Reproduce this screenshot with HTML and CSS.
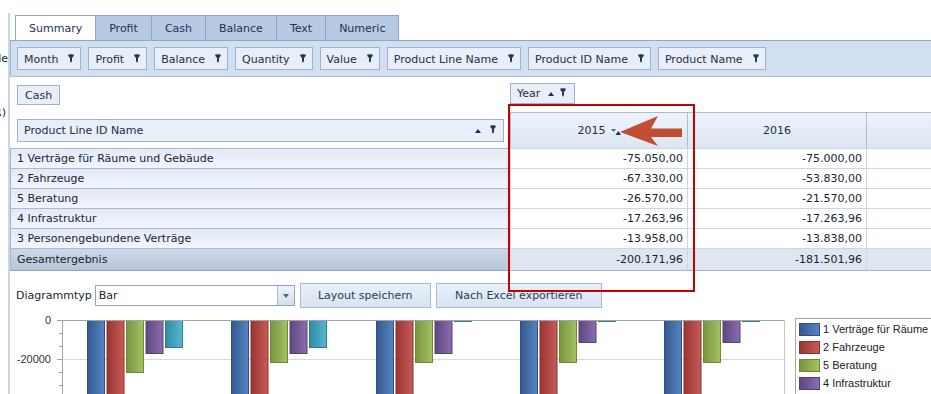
FILE: index.html
```html
<!DOCTYPE html>
<html>
<head>
  <title>Pivot Grid</title>
  <link rel="stylesheet" href="styles.css">
</head>
<body>
  <svg class="defs" width="0" height="0">
    <symbol id="pin" viewBox="0 0 6 9">
      <path d="M0.3 0.6 Q3 -0.2 5.7 0.6 V2 L4 4 V7 L3 9 L2 7 V4 L0.3 2 Z" fill="#233858"/>
    </symbol>
  </svg>

  <div class="page">
    <div class="cut">
      <div class="cut-line cut-top"><span>Tabelle</span></div>
      <div class="cut-line cut-mid"><span>(EUR)</span></div>
    </div>

    <div class="panel">
      <!-- tab strip -->
      <div class="tabs">
        <div class="tab active">Summary</div>
        <div class="tab">Profit</div>
        <div class="tab">Cash</div>
        <div class="tab">Balance</div>
        <div class="tab">Text</div>
        <div class="tab">Numeric</div>
      </div>

      <!-- filter fields -->
      <div class="filters">
        <div class="field">Month<svg class="pin"><use href="#pin"/></svg></div>
        <div class="field">Profit<svg class="pin"><use href="#pin"/></svg></div>
        <div class="field">Balance<svg class="pin"><use href="#pin"/></svg></div>
        <div class="field">Quantity<svg class="pin"><use href="#pin"/></svg></div>
        <div class="field">Value<svg class="pin"><use href="#pin"/></svg></div>
        <div class="field">Product Line Name<svg class="pin"><use href="#pin"/></svg></div>
        <div class="field">Product ID Name<svg class="pin"><use href="#pin"/></svg></div>
        <div class="field">Product Name<svg class="pin"><use href="#pin"/></svg></div>
      </div>

      <!-- pivot table -->
      <div class="pivot">
        <div class="area-data"><div class="field small">Cash</div></div>
        <div class="area-cols"><div class="field year">Year<i class="up"></i><svg class="pin"><use href="#pin"/></svg></div></div>

        <div class="head-left"><div class="field wide"><span>Product Line ID Name</span><i class="up"></i><svg class="pin"><use href="#pin"/></svg></div></div>
        <div class="col-head">2015
          <svg class="sort" width="10" height="7" viewBox="0 0 10 7">
            <path d="M0 1 H5 L2.5 4 Z" fill="#5b6b83"/>
            <path d="M4.5 7 H10 L7.25 3 Z" fill="#1d3050"/>
          </svg>
        </div>
        <div class="col-head">2016</div>
        <div class="col-head"></div>

        <div class="rh">1 Verträge für Räume und Gebäude</div>
        <div class="num">-75.050,00</div><div class="num">-75.000,00</div><div class="num"></div>

        <div class="rh">2 Fahrzeuge</div>
        <div class="num">-67.330,00</div><div class="num">-53.830,00</div><div class="num"></div>

        <div class="rh">5 Beratung</div>
        <div class="num">-26.570,00</div><div class="num">-21.570,00</div><div class="num"></div>

        <div class="rh">4 Infrastruktur</div>
        <div class="num">-17.263,96</div><div class="num">-17.263,96</div><div class="num"></div>

        <div class="rh">3 Personengebundene Verträge</div>
        <div class="num">-13.958,00</div><div class="num">-13.838,00</div><div class="num"></div>

        <div class="rh total">Gesamtergebnis</div>
        <div class="num total">-200.171,96</div><div class="num total">-181.501,96</div><div class="num total"></div>
      </div>

      <!-- chart toolbar -->
      <div class="toolbar">
        <span class="label">Diagrammtyp</span>
        <div class="select">
          <span>Bar</span>
          <i class="drop"><i class="down"></i></i>
        </div>
        <button class="btn btn-save">Layout speichern</button>
        <button class="btn btn-export">Nach Excel exportieren</button>
      </div>

      <!-- chart -->
      <div class="chart">
        <svg class="plot" width="780" height="120" viewBox="10 312 780 120">
          <defs>
            <linearGradient id="gBlue" x1="0" x2="1"><stop offset="0" stop-color="#345a8d"/><stop offset="1" stop-color="#5485c2"/></linearGradient>
            <linearGradient id="gRed" x1="0" x2="1"><stop offset="0" stop-color="#983634"/><stop offset="1" stop-color="#c85b58"/></linearGradient>
            <linearGradient id="gGreen" x1="0" x2="1"><stop offset="0" stop-color="#76953d"/><stop offset="1" stop-color="#a4c463"/></linearGradient>
            <linearGradient id="gPurple" x1="0" x2="1"><stop offset="0" stop-color="#5f4780"/><stop offset="1" stop-color="#8a6fae"/></linearGradient>
            <linearGradient id="gTeal" x1="0" x2="1"><stop offset="0" stop-color="#318aa3"/><stop offset="1" stop-color="#58b8d1"/></linearGradient>
          </defs>

          <text class="ylab" x="51" y="324">0</text>
          <text class="ylab" x="51" y="363">-20000</text>
          <text class="ylab" x="51" y="402">-40000</text>

          <line x1="62" y1="359.5" x2="784" y2="359.5" stroke="#d9d9d9"/>
          <line x1="62" y1="398.5" x2="784" y2="398.5" stroke="#d9d9d9"/>
          <line x1="784.5" y1="320" x2="784.5" y2="432" stroke="#c8c8c8"/>

          <!-- 2015 -->
          <rect class="s1" x="87.5" y="320.5" width="17" height="146"/>
          <rect class="s2" x="107" y="320.5" width="17" height="131"/>
          <rect class="s3" x="126.5" y="320.5" width="17" height="52"/>
          <rect class="s4" x="146" y="320.5" width="17" height="33"/>
          <rect class="s5" x="165.5" y="320.5" width="17" height="27"/>
          <!-- 2016 -->
          <rect class="s1" x="231.5" y="320.5" width="17" height="146"/>
          <rect class="s2" x="251" y="320.5" width="17" height="105"/>
          <rect class="s3" x="270.5" y="320.5" width="17" height="42"/>
          <rect class="s4" x="290" y="320.5" width="17" height="33"/>
          <rect class="s5" x="309.5" y="320.5" width="17" height="27"/>
          <!-- 2017 -->
          <rect class="s1" x="376.5" y="320.5" width="17" height="146"/>
          <rect class="s2" x="396" y="320.5" width="17" height="140"/>
          <rect class="s3" x="415.5" y="320.5" width="17" height="42"/>
          <rect class="s4" x="435" y="320.5" width="17" height="33"/>
          <rect class="s5" x="454.5" y="320.5" width="17" height="1"/>
          <!-- 2018 -->
          <rect class="s1" x="520.5" y="320.5" width="17" height="146"/>
          <rect class="s2" x="540" y="320.5" width="17" height="140"/>
          <rect class="s3" x="559.5" y="320.5" width="17" height="42"/>
          <rect class="s4" x="579" y="320.5" width="17" height="22"/>
          <rect class="s5" x="598.5" y="320.5" width="17" height="1"/>
          <!-- 2019 -->
          <rect class="s1" x="664.5" y="320.5" width="17" height="146"/>
          <rect class="s2" x="684" y="320.5" width="17" height="140"/>
          <rect class="s3" x="703.5" y="320.5" width="17" height="42"/>
          <rect class="s4" x="723" y="320.5" width="17" height="22"/>
          <rect class="s5" x="742.5" y="320.5" width="17" height="1"/>

          <line x1="57" y1="320.5" x2="784" y2="320.5" stroke="#a3a3a3"/>
          <line x1="62.5" y1="320" x2="62.5" y2="432" stroke="#a3a3a3"/>
          <line x1="57" y1="359.5" x2="62" y2="359.5" stroke="#a3a3a3"/>
          <line x1="57" y1="398.5" x2="62" y2="398.5" stroke="#a3a3a3"/>
          <line x1="59" y1="333.5" x2="62" y2="333.5" stroke="#a3a3a3"/>
          <line x1="59" y1="346.5" x2="62" y2="346.5" stroke="#a3a3a3"/>
          <line x1="59" y1="372.5" x2="62" y2="372.5" stroke="#a3a3a3"/>
          <line x1="59" y1="385.5" x2="62" y2="385.5" stroke="#a3a3a3"/>
        </svg>

        <div class="legend">
          <div class="item"><i class="sw sw1"></i>1 Verträge für Räume und Gebäude</div>
          <div class="item"><i class="sw sw2"></i>2 Fahrzeuge</div>
          <div class="item"><i class="sw sw3"></i>5 Beratung</div>
          <div class="item"><i class="sw sw4"></i>4 Infrastruktur</div>
          <div class="item"><i class="sw sw5"></i>3 Personengebundene Verträge</div>
        </div>
      </div>
    </div>

    <!-- annotation drawn over the grid -->
    <div class="highlight"></div>
    <svg class="arrow" width="72" height="40" viewBox="0 0 72 40">
      <path d="M5 22 L43 6 L36 18.5 H67 V27 H36 L43 36 Z" fill="#c24e32"/>
    </svg>
  </div>
</body>
</html>
```

FILE: styles.css
```css
/* base */
html, body {
  overflow: hidden;
}
body {
  margin: 0;
  font-family: "DejaVu Sans", Verdana, sans-serif;
  font-size: 11px;
  color: #1a2333;
  background: #fff;
}
.defs {
  position: absolute;
}
.page {
  display: flex;
  width: 931px;
  position: relative;
}

/* clipped text of the neighbouring pane */
.cut {
  width: 8px;
  flex: none;
}
.cut-line {
  display: flex;
  justify-content: flex-end;
  overflow: hidden;
  white-space: nowrap;
  line-height: 13px;
}
.cut-top {
  margin-top: 52px;
}
.cut-mid {
  margin-top: 41px;
  padding-right: 2px;
}

.panel {
  flex: 1;
  min-width: 0;
  margin-top: 13px;
  border-left: 2px solid #c9d7e9;
}

/* tabs */
.tabs {
  display: flex;
  margin: 2px 0 0 5px;
}
.tab {
  padding: 1px 13px 0;
  line-height: 23px;
  border: 1px solid #8fa7c6;
  border-bottom: 0;
  margin-right: -1px;
  background: #b6cae3;
  color: #1f3150;
}
.tab.active {
  background: #fff;
}

/* filter fields */
.filters {
  display: flex;
  gap: 7px;
  padding: 6px 0 6px 6px;
  background: #d2dff0;
  border-top: 1px solid #8fa7c6;
  border-bottom: 1px solid #aabed7;
  border-left: 1px solid #9db3cf;
}
.field {
  display: inline-flex;
  align-items: center;
  height: 23px;
  box-sizing: border-box;
  padding: 1px 6px 0;
  border: 1px solid #9db2cd;
  background: #e8eff9;
  white-space: nowrap;
  color: #1f2e46;
}
.pin {
  width: 6px;
  height: 9px;
  margin-left: 10px;
  margin-bottom: 2px;
  flex: none;
}
.up {
  display: inline-block;
  width: 0;
  height: 0;
  border-left: 3px solid transparent;
  border-right: 3px solid transparent;
  border-bottom: 4px solid #1d3050;
}
.field.small {
  height: 20px;
  padding: 0 7px;
}
.field.year {
  height: 21px;
  padding: 0 8px 0 6px;
}
.field.year .up {
  margin-left: 8px;
}
.field.year .pin {
  margin-left: 6px;
}
.field.wide {
  display: flex;
  padding: 0 7px 0 6px;
}
.field.wide span {
  flex: 1;
}
.field.wide .pin {
  margin-left: 9px;
}

/* pivot grid */
.pivot {
  display: grid;
  grid-template-columns: 500px 177px 179px 1fr;
  grid-template-rows: 35px 36px repeat(5, 20px) 23px;
}
.pivot > div {
  box-sizing: border-box;
  white-space: nowrap;
  overflow: hidden;
}
.area-data {
  padding: 8px 0 0 7px;
}
.area-cols {
  grid-column: 2 / -1;
  padding-top: 6px;
}
.head-left {
  padding: 7px 6px 0 7px;
}
.col-head {
  display: flex;
  align-items: center;
  justify-content: center;
  border-left: 1px solid #a9bcd5;
  border-top: 1px solid #a9bcd5;
  background: linear-gradient(#eef3fa, #dce6f2);
  color: #1f2e46;
}
.sort {
  margin-left: 5px;
  margin-top: 2px;
}
.rh {
  border-left: 1px solid #a1b5ce;
  border-top: 1px solid #a8bbd3;
  background: linear-gradient(#e3eaf5, #f2f5fb);
  padding-left: 6px;
  line-height: 19px;
}
.num {
  border-left: 1px solid #c5d8ee;
  border-top: 1px solid #c5d8ee;
  text-align: right;
  padding-right: 4px;
  line-height: 19px;
}
.rh.total {
  background: linear-gradient(#ccd8e7, #b7c6d9);
  border-bottom: 1px solid #8ea3be;
  line-height: 21px;
}
.num.total {
  background: #dfe6ef;
  border-bottom: 1px solid #9fb3cc;
  line-height: 21px;
}

/* toolbar */
.toolbar {
  display: flex;
  align-items: center;
  height: 25px;
  margin-top: 12px;
  padding-left: 6px;
}
.select {
  display: flex;
  width: 200px;
  height: 21px;
  box-sizing: border-box;
  margin-left: 3px;
  border: 1px solid #8fa6c2;
  background: #fff;
}
.select span {
  flex: 1;
  padding-left: 3px;
  line-height: 19px;
}
.drop {
  display: flex;
  align-items: center;
  justify-content: center;
  width: 16px;
  border-left: 1px solid #a9bbd2;
  background: linear-gradient(#eef3fa, #d5e0ee);
}
.down {
  width: 0;
  height: 0;
  border-left: 3px solid transparent;
  border-right: 3px solid transparent;
  border-top: 4px solid #56657d;
}
.btn {
  height: 25px;
  box-sizing: border-box;
  border: 1px solid #a7bad3;
  background: linear-gradient(#e9f0f9, #d8e4f3);
  color: #2e3c57;
  font: inherit;
  padding: 0;
}
.btn-save {
  width: 131px;
  margin-left: 5px;
}
.btn-export {
  width: 166px;
  margin-left: 5px;
}

/* chart */
.chart {
  display: flex;
  margin-top: 4px;
}
.plot {
  flex: none;
}
.ylab {
  font-family: "Liberation Sans", Arial, sans-serif;
  font-size: 11px;
  fill: #333;
  text-anchor: end;
}
.s1 { fill: url(#gBlue); stroke: #2d507f; }
.s2 { fill: url(#gRed); stroke: #8a302e; }
.s3 { fill: url(#gGreen); stroke: #6d8b37; }
.s4 { fill: url(#gPurple); stroke: #563f75; }
.s5 { fill: url(#gTeal); stroke: #2c7d94; }

.legend {
  flex: none;
  margin: 6px 0 0 5px;
  padding: 1px 40px 0 3px;
  border: 1px solid #a6a6a6;
  font-family: "Liberation Sans", Arial, sans-serif;
  font-size: 11px;
  color: #222;
  white-space: nowrap;
}
.item {
  display: flex;
  align-items: center;
  height: 18px;
}
.sw {
  width: 21px;
  height: 13px;
  box-sizing: border-box;
  margin-right: 3px;
  border: 1px solid;
}
.sw1 { background: linear-gradient(90deg, #345a8d, #5485c2); border-color: #2d507f; }
.sw2 { background: linear-gradient(90deg, #983634, #c85b58); border-color: #8a302e; }
.sw3 { background: linear-gradient(90deg, #76953d, #a4c463); border-color: #6d8b37; }
.sw4 { background: linear-gradient(90deg, #5f4780, #8a6fae); border-color: #563f75; }
.sw5 { background: linear-gradient(90deg, #318aa3, #58b8d1); border-color: #2c7d94; }

/* annotation */
.highlight {
  position: absolute;
  left: 508px;
  top: 104px;
  width: 183px;
  height: 184px;
  border: 2px solid #c40000;
}
.arrow {
  position: absolute;
  left: 615px;
  top: 110px;
}
```
